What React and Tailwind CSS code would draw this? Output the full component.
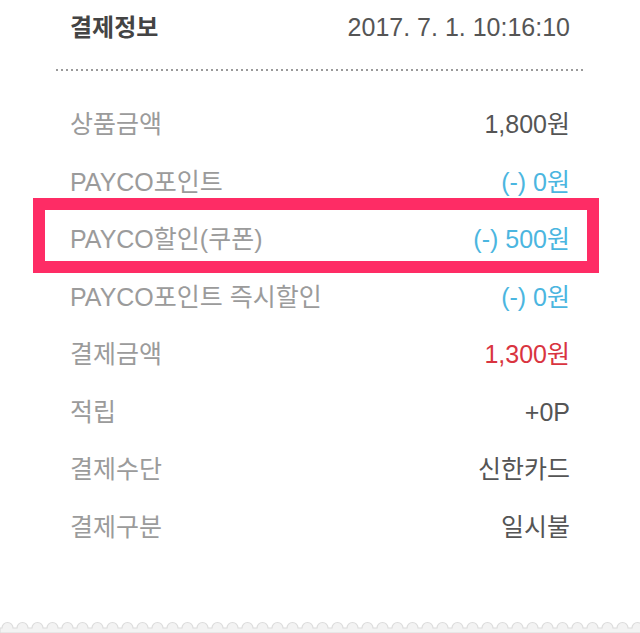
import React from "react";

const FONT = { fontFamily: '"Liberation Sans", "Noto Sans CJK KR", sans-serif' };

const ROWS = [
  { label: "상품금액", value: "1,800원", tone: "text-[#555555]" },
  { label: "PAYCO포인트", value: "(-) 0원", tone: "text-[#4bb6e0]" },
  { label: "PAYCO할인(쿠폰)", value: "(-) 500원", tone: "text-[#4bb6e0]" },
  { label: "PAYCO포인트 즉시할인", value: "(-) 0원", tone: "text-[#4bb6e0]" },
  { label: "결제금액", value: "1,300원", tone: "text-[#d93440]" },
  { label: "적립", value: "+0P", tone: "text-[#555555]" },
  { label: "결제수단", value: "신한카드", tone: "text-[#555555]" },
  { label: "결제구분", value: "일시불", tone: "text-[#555555]" },
];

function Scallops() {
  // bumps along the bottom edge of the receipt
  const period = 15;
  const count = Math.ceil(640 / period) + 1;
  let d = "M0 14 L0 9";
  for (let i = 0; i < count; i++) {
    const x = i * period;
    d += ` L${x + 2} 9 A5.5 5.5 0 0 1 ${x + 13} 9`;
  }
  d += ` L${count * period} 9 L${count * period} 14 Z`;
  return (
    <svg width="640" height="14" viewBox="0 0 640 14" className="block">
      <path d={d} fill="#f3f3f3" stroke="#dcdcdc" strokeWidth="1.2" />
    </svg>
  );
}

function Row({ label, value, tone }) {
  return (
    <div className="flex h-[57.5px] items-center justify-between px-[70px] text-[25px]">
      <span className="text-[#9b9b9b]">{label}</span>
      <span className={tone}>{value}</span>
    </div>
  );
}

export default function App() {
  return (
    <div className="relative flex h-[633px] w-[640px] flex-col overflow-hidden bg-white" style={FONT}>
      <div className="flex h-[56px] items-center justify-between px-[70px]">
        <span className="text-[24px] font-semibold text-[#444444]">결제정보</span>
        <span className="text-[25px] text-[#555555]">2017. 7. 1. 10:16:10</span>
      </div>

      <div className="mx-[56px] mt-[13px] h-[2px] bg-[linear-gradient(to_right,#9a9a9a_2px,transparent_2px)] bg-[length:5px_2px]" />

      <div className="pt-[25px]">
        {ROWS.map((r) => (
          <Row key={r.label} {...r} />
        ))}
      </div>

      <div className="mt-auto">
        <Scallops />
      </div>

      {/* highlight annotation */}
      <div className="pointer-events-none absolute left-[33px] top-[198px] h-[75px] w-[566px] border-[12px] border-[#fe2c65]" />
    </div>
  );
}
